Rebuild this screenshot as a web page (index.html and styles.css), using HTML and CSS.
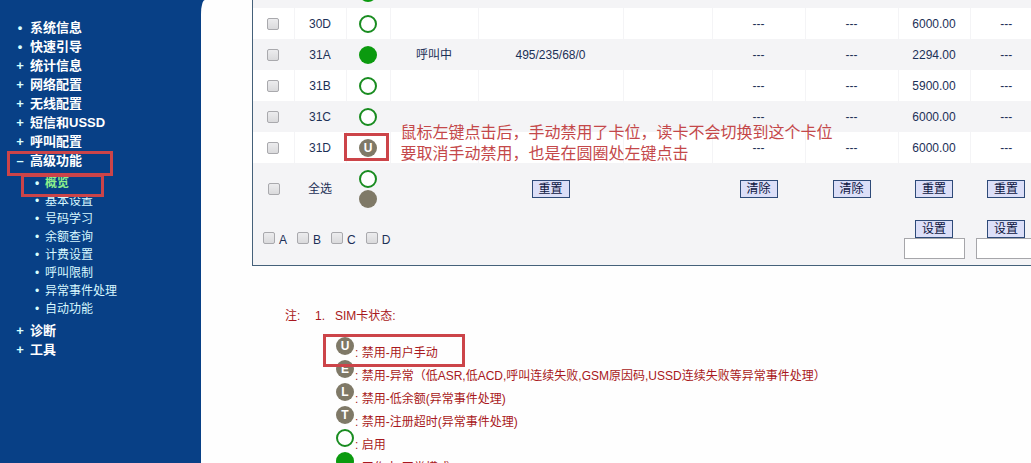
FILE: index.html
```html
<!DOCTYPE html>
<html lang="zh-CN">
<head>
    <meta charset="UTF-8">
    <meta name="viewport" content="width=device-width, initial-scale=1.0">
    <title>概览</title>
    <link rel="stylesheet" href="styles.css">
</head>
<body>
    <div class="page">
        <nav class="sidebar">
            <ul class="menu">
                <li><a class="leaf" href="#">系统信息</a></li>
                <li><a class="leaf" href="#">快速引导</a></li>
                <li><a class="closed" href="#">统计信息</a></li>
                <li><a class="closed" href="#">网络配置</a></li>
                <li><a class="closed" href="#">无线配置</a></li>
                <li><a class="closed" href="#">短信和USSD</a></li>
                <li><a class="closed" href="#">呼叫配置</a></li>
                <li class="marked">
                    <a class="opened" href="#">高级功能</a>
                    <span class="mark mark-menu"></span>
                    <ul class="submenu">
                        <li class="marked"><a class="current" href="#">概览</a><span class="mark mark-sub"></span></li>
                        <li><a href="#">基本设置</a></li>
                        <li><a href="#">号码学习</a></li>
                        <li><a href="#">余额查询</a></li>
                        <li><a href="#">计费设置</a></li>
                        <li><a href="#">呼叫限制</a></li>
                        <li><a href="#">异常事件处理</a></li>
                        <li><a href="#">自动功能</a></li>
                    </ul>
                </li>
                <li><a class="closed" href="#">诊断</a></li>
                <li><a class="closed" href="#">工具</a></li>
            </ul>
        </nav>

        <main class="content">
            <div class="table-box">
                <table class="sim-table">
                    <colgroup>
                        <col class="w-check"><col class="w-port"><col class="w-state"><col class="w-call"><col class="w-stat">
                        <col class="w-clear"><col class="w-wide"><col class="w-wide"><col class="w-num"><col class="w-num">
                    </colgroup>
                    <tbody>
                        <tr>
                            <td></td><td></td>
                            <td><button class="dot busy" type="button" aria-label="30C"></button></td>
                            <td></td><td></td><td></td><td></td><td></td><td></td><td></td>
                        </tr>
                        <tr>
                            <td><input type="checkbox" aria-label="30D"></td>
                            <td>30D</td>
                            <td><button class="dot on" type="button" aria-label="30D"></button></td>
                            <td></td><td></td><td></td>
                            <td>---</td><td>---</td><td>6000.00</td><td>---</td>
                        </tr>
                        <tr>
                            <td><input type="checkbox" aria-label="31A"></td>
                            <td>31A</td>
                            <td><button class="dot busy" type="button" aria-label="31A"></button></td>
                            <td>呼叫中</td><td>495/235/68/0</td><td></td>
                            <td>---</td><td>---</td><td>2294.00</td><td>---</td>
                        </tr>
                        <tr>
                            <td><input type="checkbox" aria-label="31B"></td>
                            <td>31B</td>
                            <td><button class="dot on" type="button" aria-label="31B"></button></td>
                            <td></td><td></td><td></td>
                            <td>---</td><td>---</td><td>5900.00</td><td>---</td>
                        </tr>
                        <tr>
                            <td><input type="checkbox" aria-label="31C"></td>
                            <td>31C</td>
                            <td><button class="dot on" type="button" aria-label="31C"></button></td>
                            <td></td><td></td><td></td>
                            <td>---</td><td>---</td><td>6000.00</td><td>---</td>
                        </tr>
                        <tr>
                            <td><input type="checkbox" aria-label="31D"></td>
                            <td>31D</td>
                            <td class="marked"><button class="dot off" type="button">U</button><span class="mark mark-slot"></span></td>
                            <td class="marked">
                                <p class="tip">鼠标左键点击后，手动禁用了卡位，读卡不会切换到这个卡位<br>要取消手动禁用，也是在圆圈处左键点击</p>
                            </td>
                            <td></td><td></td>
                            <td>---</td><td>---</td><td>6000.00</td><td>---</td>
                        </tr>
                    </tbody>
                    <tfoot>
                        <tr>
                            <td><input type="checkbox" id="all"></td>
                            <td><label for="all">全选</label></td>
                            <td>
                                <div class="stack">
                                    <button class="dot on" type="button" aria-label="启用"></button>
                                    <button class="dot off" type="button" aria-label="禁用"></button>
                                </div>
                            </td>
                            <td></td>
                            <td><button class="btn" type="button">重置</button></td>
                            <td></td>
                            <td><button class="btn" type="button">清除</button></td>
                            <td><button class="btn" type="button">清除</button></td>
                            <td><button class="btn" type="button">重置</button></td>
                            <td><button class="btn" type="button">重置</button></td>
                        </tr>
                        <tr>
                            <td colspan="4">
                                <div class="slots">
                                    <label><input type="checkbox">A</label>
                                    <label><input type="checkbox">B</label>
                                    <label><input type="checkbox">C</label>
                                    <label><input type="checkbox">D</label>
                                </div>
                            </td>
                            <td></td><td></td><td></td><td></td>
                            <td>
                                <div class="setter">
                                    <button class="btn" type="button">设置</button>
                                    <input type="text" aria-label="设置">
                                </div>
                            </td>
                            <td>
                                <div class="setter">
                                    <button class="btn" type="button">设置</button>
                                    <input type="text" aria-label="设置">
                                </div>
                            </td>
                        </tr>
                    </tfoot>
                </table>
            </div>

            <section class="notes">
                <span class="notes-label">注:</span>
                <span class="notes-num">1.</span>
                <div>
                    <p class="notes-title">SIM卡状态:</p>
                    <ul class="legend">
                        <li class="marked"><span class="dot off">U</span><span class="desc">: 禁用-用户手动</span><span class="mark mark-legend"></span></li>
                        <li><span class="dot off">E</span><span class="desc">: 禁用-异常（低ASR,低ACD,呼叫连续失败,GSM原因码,USSD连续失败等异常事件处理）</span></li>
                        <li><span class="dot off">L</span><span class="desc">: 禁用-低余额(异常事件处理)</span></li>
                        <li><span class="dot off">T</span><span class="desc">: 禁用-注册超时(异常事件处理)</span></li>
                        <li><span class="dot on"></span><span class="desc">: 启用</span></li>
                        <li><span class="dot busy"></span><span class="desc">: 工作中-正常模式</span></li>
                    </ul>
                </div>
            </section>
        </main>
    </div>
</body>
</html>
```
FILE: styles.css
```css
* {
    box-sizing: border-box;
}
body {
    margin: 0;
    font-family: "Liberation Sans", "Noto Sans CJK SC", sans-serif;
    font-size: 12px;
    line-height: 16px;
    color: #1c3057;
    background: #084086;
}
ul, p {
    margin: 0;
    padding: 0;
    list-style: none;
}
.page {
    display: flex;
    height: 100vh;
    overflow: hidden;
}

/* menu */
.sidebar {
    flex: 0 0 201px;
    background: #084086;
}
.menu {
    padding: 18px 0 0 16px;
}
.menu a {
    display: flex;
    align-items: center;
    height: 19px;
    color: #fff;
    font-size: 13px;
    font-weight: bold;
    text-decoration: none;
}
.menu a::before {
    width: 8px;
    margin-right: 6px;
    text-align: center;
    color: #d8ffff;
}
.menu .leaf::before {
    content: "•";
}
.menu .closed::before {
    content: "+";
}
.menu .opened::before {
    content: "–";
}
.submenu {
    padding: 4px 0 3px 17px;
}
.menu .submenu a {
    height: 18px;
    color: #d8f8ff;
    font-size: 12px;
    font-weight: normal;
}
.menu .submenu a::before {
    content: "•";
    margin-right: 4px;
}
.menu .submenu .current {
    color: #8cf08c;
    font-weight: bold;
}

/* red frames */
.marked {
    position: relative;
}
.mark {
    position: absolute;
    border: 3px solid #cc4449;
    pointer-events: none;
}
.mark-menu {
    left: -9px;
    top: 0;
    width: 106px;
    height: 25px;
}
.mark-sub {
    left: -12px;
    top: 0;
    width: 83px;
    height: 23px;
}
.mark-slot {
    left: -3px;
    top: 1px;
    width: 45px;
    height: 28px;
}
.mark-legend {
    left: -13px;
    top: -3px;
    width: 142px;
    height: 33px;
}
.tip {
    position: absolute;
    left: 10px;
    top: -10px;
    font-size: 16px;
    line-height: 21px;
    text-align: left;
    white-space: nowrap;
    color: #c4484a;
}

/* table */
.content {
    flex: 1;
    min-width: 0;
    padding-left: 51px;
    overflow: hidden;
    background: #fefefe;
    border-top-left-radius: 4px 14px;
}
.table-box {
    min-width: 791px;
    margin-top: -24px;
    border: 1px solid #45617a;
}
.sim-table {
    width: 100%;
    table-layout: fixed;
    border-collapse: collapse;
}
.w-check { width: 41px; }
.w-port { width: 52px; }
.w-state { width: 44px; }
.w-call { width: 88px; }
.w-stat { width: 145px; }
.w-clear { width: 89px; }
.w-wide { width: 93px; }
.w-num { width: 72px; }
.sim-table td {
    height: 31px;
    padding: 0;
    text-align: center;
    vertical-align: middle;
}
.sim-table tbody tr {
    background: #fff;
}
.sim-table tbody td + td {
    border-left: 1px solid #f4f4f6;
}
.sim-table tbody tr:nth-child(odd),
.sim-table tfoot {
    background: #f4f4f6;
}
.sim-table tfoot td {
    height: 51px;
}
input[type="checkbox"] {
    appearance: none;
    display: inline-block;
    width: 12px;
    height: 12px;
    margin: 0;
    vertical-align: middle;
    border: 1px solid #a9a9ad;
    border-radius: 2px;
    background: linear-gradient(#ececee, #dadadc);
}
input[type="checkbox"]:checked {
    background: #4a6fb5;
}
.dot {
    display: block;
    flex: none;
    width: 18px;
    height: 18px;
    margin: 0 auto;
    padding: 0;
    border: 0;
    border-radius: 50%;
    font: bold 12px/18px "Liberation Sans", sans-serif;
    text-align: center;
    color: #fff;
}
.dot.on {
    border: 2px solid #198c20;
    background: #fff;
}
.dot.busy {
    background: #0b9a0f;
}
.dot.off {
    background: #7f7967;
}
.stack {
    display: flex;
    flex-direction: column;
    gap: 2px;
}
.btn {
    display: inline-block;
    width: 38px;
    height: 18px;
    padding: 0;
    border: 1px solid #2e4a78;
    background: #dcdff8;
    color: #0c1440;
    font: inherit;
    line-height: 16px;
    vertical-align: middle;
}
.slots {
    display: flex;
    gap: 10px;
    padding-left: 10px;
}
.slots label {
    display: flex;
    align-items: flex-start;
    gap: 4px;
}
.setter {
    display: flex;
    flex-direction: column;
    align-items: center;
}
.setter input {
    width: 61px;
    height: 21px;
    border: 1px solid #a6a6aa;
    background: #fff;
}

/* notes */
.notes {
    display: flex;
    padding: 42px 0 0 33px;
    color: #a81820;
}
.notes-label {
    width: 30px;
}
.notes-num {
    width: 20px;
}
.legend {
    padding: 13px 0 0 1px;
}
.legend li {
    display: flex;
    height: 23px;
}
.legend .dot {
    margin: 0;
}
.desc {
    padding: 8px 0 0 1px;
    white-space: nowrap;
}
```
